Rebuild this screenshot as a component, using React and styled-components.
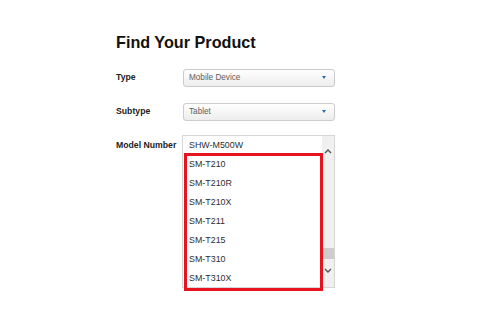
import React from 'react';
import styled, { createGlobalStyle } from 'styled-components';

const models = [
  'SHW-M500W',
  'SM-T210',
  'SM-T210R',
  'SM-T210X',
  'SM-T211',
  'SM-T215',
  'SM-T310',
  'SM-T310X',
];

const GlobalStyle = createGlobalStyle`
  html, body {
    margin: 0;
    padding: 0;
    background: #fff;
    font-family: "Liberation Sans", Arial, sans-serif;
  }
`;

const Page = styled.div`
  width: 500px;
  height: 325px;
  box-sizing: border-box;
  padding: 32px 0 0 116px;
`;

const Title = styled.h1`
  margin: 0;
  font-size: 16.2px;
  line-height: 20px;
  font-weight: bold;
  color: #111;
`;

const Form = styled.div`
  display: flex;
  flex-direction: column;
  gap: 15px;
  margin-top: 16px;
`;

const Row = styled.div`
  display: grid;
  grid-template-columns: 66px 153px;
  align-items: ${props => (props.top ? 'start' : 'center')};
  margin-top: ${props => props.shift || 0}px;
`;

const Label = styled.div`
  font-size: 8.7px;
  font-weight: bold;
  color: #222;
  line-height: 19px;
  margin-top: ${props => (props.top ? 1 : 0)}px;
`;

const Select = styled.div`
  height: 18px;
  width: 152px;
  box-sizing: border-box;
  margin-left: 1px;
  border: 1px solid #cbcbcb;
  border-radius: 3px;
  background: linear-gradient(#ffffff, #ededed);
  display: flex;
  align-items: center;
  justify-content: space-between;
  padding: 0 8px 0 5px;
  font-size: 8.2px;
  color: #5e5e5e;
`;

const Caret = styled.span`
  width: 0;
  height: 0;
  border-left: 2.5px solid transparent;
  border-right: 2.5px solid transparent;
  border-top: 3.5px solid #1f6fb8;
`;

const ListWrap = styled.div`
  position: relative;
  width: 153px;
`;

const ListBox = styled.div`
  height: 153px;
  box-sizing: border-box;
  border: 1px solid #d6d6d6;
  display: flex;
  background: #fff;
`;

const Options = styled.div`
  flex: 1;
  display: flex;
  flex-direction: column;
`;

const Option = styled.div`
  height: 19px;
  line-height: 19px;
  padding-left: 6px;
  font-size: 8.9px;
  color: #2e2e2e;
`;

const ScrollBar = styled.div`
  width: 12px;
  background: #f0f0f0;
  display: flex;
  flex-direction: column;
  align-items: center;
  padding: 8px 0 10px;
  box-sizing: border-box;
`;

const Arrow = styled.div`
  height: 14px;
  display: flex;
  align-items: center;
  justify-content: center;
`;

const Track = styled.div`
  flex: 1;
  width: 100%;
  display: flex;
  flex-direction: column;
  justify-content: flex-end;
`;

const Thumb = styled.div`
  height: 11px;
  margin-bottom: 4px;
  background: #cdcdcd;
`;

const Highlight = styled.div`
  position: absolute;
  left: 2px;
  top: 18px;
  width: 139px;
  height: 138px;
  box-sizing: border-box;
  border: 3px solid #e6141f;
  pointer-events: none;
`;

const Chevron = ({ up }) => (
  <svg width="8" height="5" viewBox="0 0 8 5">
    <path
      d={up ? 'M1 4 L4 1 L7 4' : 'M1 1 L4 4 L7 1'}
      fill="none"
      stroke="#555"
      strokeWidth="1.4"
    />
  </svg>
);

const App = () => {
  return (
    <Page>
      <GlobalStyle />
      <Title>Find Your Product</Title>
      <Form>
        <Row>
          <Label>Type</Label>
          <Select>
            Mobile Device
            <Caret />
          </Select>
        </Row>
        <Row>
          <Label>Subtype</Label>
          <Select>
            Tablet
            <Caret />
          </Select>
        </Row>
        <Row top shift={-1}>
          <Label top>Model Number</Label>
          <ListWrap>
            <ListBox>
              <Options>
                {models.map(m => (
                  <Option key={m}>{m}</Option>
                ))}
              </Options>
              <ScrollBar>
                <Arrow><Chevron up /></Arrow>
                <Track>
                  <Thumb />
                </Track>
                <Arrow><Chevron /></Arrow>
              </ScrollBar>
            </ListBox>
            <Highlight />
          </ListWrap>
        </Row>
      </Form>
    </Page>
  );
};

export default App;
